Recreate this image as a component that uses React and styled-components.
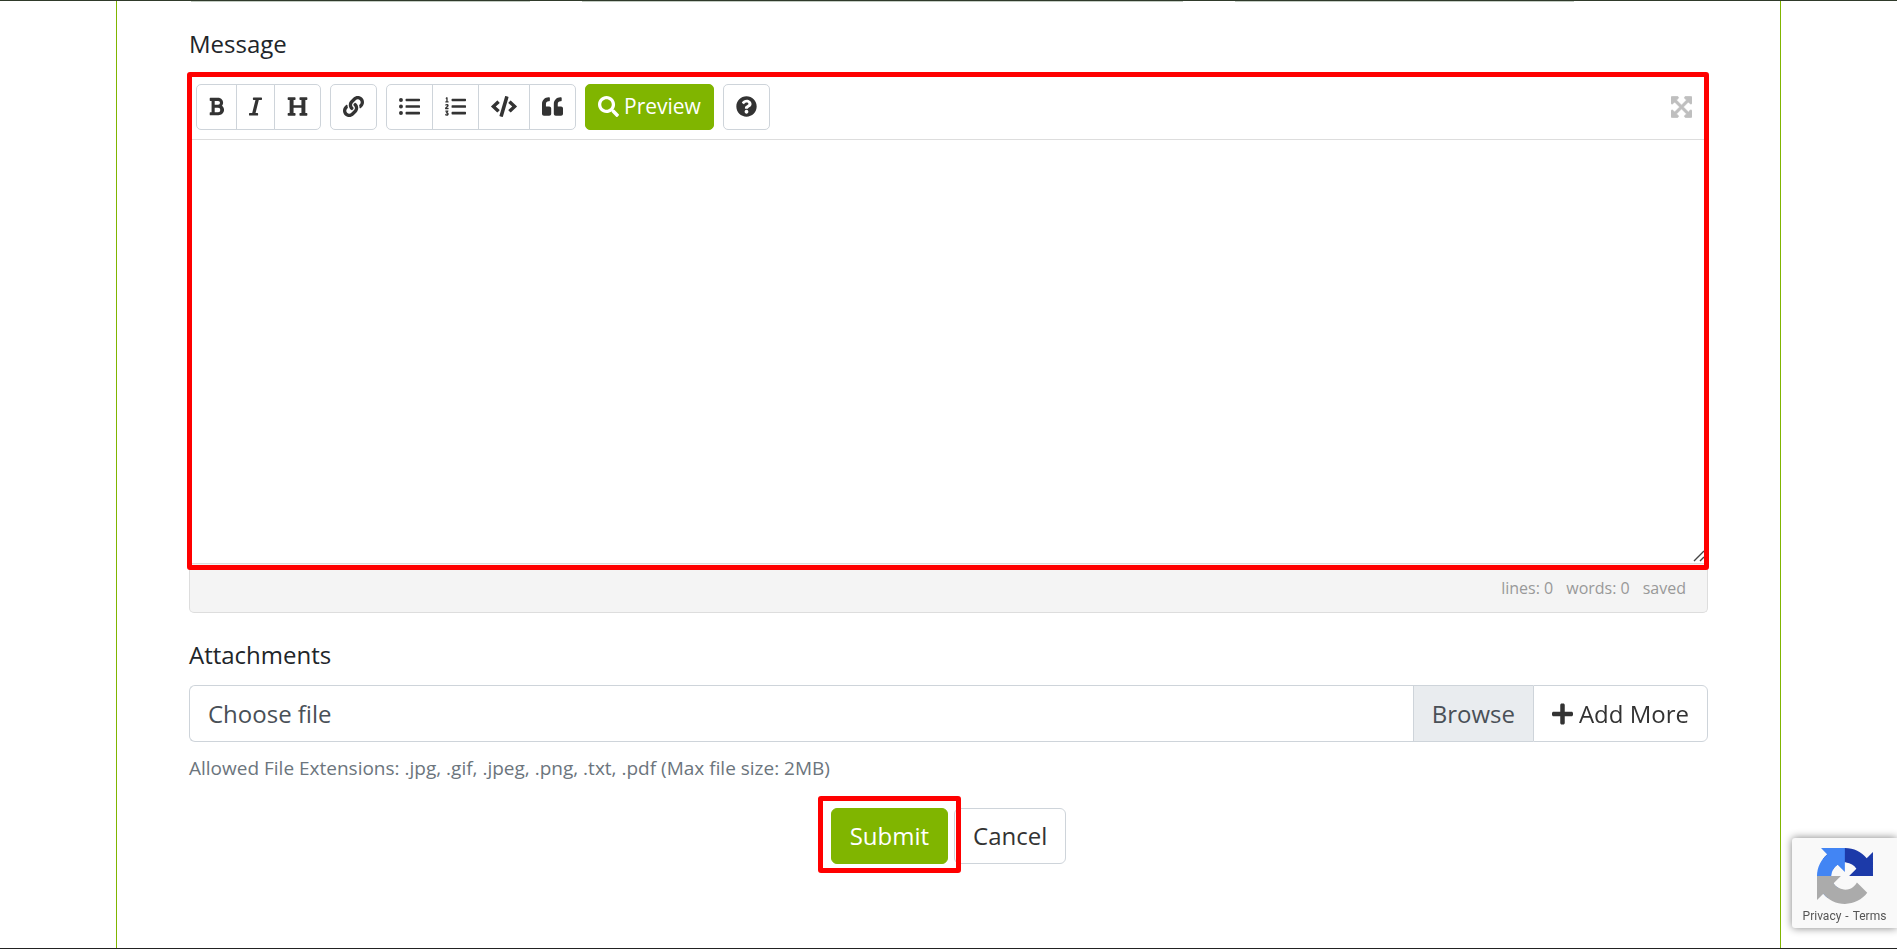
import React from "react";
import styled, { createGlobalStyle } from "styled-components";
import {
  FaBold,
  FaItalic,
  FaHeading,
  FaLink,
  FaListUl,
  FaListOl,
  FaCode,
  FaQuoteLeft,
  FaSearch,
  FaQuestionCircle,
  FaExpandArrowsAlt,
  FaPlus,
} from "react-icons/fa";

const RecaptchaLogo = () => (
  <svg viewBox="0 0 64 64" width="56" height="56" aria-hidden="true">
    <path
      fill="#1c3aa9"
      d="M64 31.955l-.033-1.37V4.687l-7.16 7.16C50.948 4.674 42.033.093 32.05.093c-10.4 0-19.622 4.96-25.458 12.64l11.736 11.86a15.55 15.55 0 0 1 4.754-5.334c2.05-1.6 4.952-2.906 8.968-2.906.485 0 .86.057 1.135.163 4.976.393 9.288 3.14 11.828 7.124l-8.307 8.307L64 31.953"
    />
    <path
      fill="#4285f4"
      d="M31.862.094l-1.37.033H4.594l7.16 7.16C4.58 13.147 0 22.06 0 32.046c0 10.4 4.96 19.622 12.64 25.458L24.5 45.768a15.55 15.55 0 0 1-5.334-4.754c-1.6-2.05-2.906-4.952-2.906-8.968 0-.485.057-.86.163-1.135.393-4.976 3.14-9.288 7.124-11.828l8.307 8.307L31.86.095"
    />
    <path
      fill="#ababab"
      d="M.001 32.045l.033 1.37v25.898l7.16-7.16c5.86 7.173 14.774 11.754 24.76 11.754 10.4 0 19.622-4.96 25.458-12.64l-11.736-11.86a15.55 15.55 0 0 1-4.754 5.334c-2.05 1.6-4.952 2.906-8.968 2.906-.485 0-.86-.057-1.135-.163-4.976-.393-9.288-3.14-11.828-7.124l8.307-8.307-32.04.001"
    />
  </svg>
);

const App = () => {
  return (
    <Page>
      <GlobalStyle />
      <Panel onSubmit={(e) => e.preventDefault()}>
        <FieldEdges>
          <span />
          <span />
          <span />
        </FieldEdges>

        <Label htmlFor="message">Message</Label>
        <Editor>
          <Highlight>
            <Toolbar>
              <Group>
                <ToolButton type="button" aria-label="Bold" $icon={15}>
                  <FaBold />
                </ToolButton>
                <ToolButton type="button" aria-label="Italic" $icon={13}>
                  <FaItalic />
                </ToolButton>
                <ToolButton type="button" aria-label="Heading">
                  <FaHeading />
                </ToolButton>
              </Group>
              <Group>
                <ToolButton type="button" aria-label="Link">
                  <FaLink />
                </ToolButton>
              </Group>
              <Group>
                <ToolButton type="button" aria-label="Unordered list">
                  <FaListUl />
                </ToolButton>
                <ToolButton type="button" aria-label="Ordered list">
                  <FaListOl />
                </ToolButton>
                <ToolButton type="button" aria-label="Code" $icon={26}>
                  <FaCode />
                </ToolButton>
                <ToolButton type="button" aria-label="Quote">
                  <FaQuoteLeft />
                </ToolButton>
              </Group>
              <Group>
                <ToolButton type="button" $primary>
                  <FaSearch />
                  Preview
                </ToolButton>
              </Group>
              <Group>
                <ToolButton type="button" aria-label="Help">
                  <FaQuestionCircle />
                </ToolButton>
              </Group>
              <Fullscreen type="button" aria-label="Fullscreen">
                <FaExpandArrowsAlt />
              </Fullscreen>
            </Toolbar>
            <TextArea id="message" />
            <Grip viewBox="0 0 12 12" aria-hidden="true">
              <path d="M1 11L11 1M7 11L11 7" />
            </Grip>
          </Highlight>
          <Status>
            <span>lines: 0</span>
            <span>words: 0</span>
            <span>saved</span>
          </Status>
        </Editor>

        <Label htmlFor="attachment">Attachments</Label>
        <FileRow>
          <FileInput id="attachment" type="file" />
          <FileLabel htmlFor="attachment">
            <span>Choose file</span>
            <Browse>Browse</Browse>
          </FileLabel>
          <AddMore type="button">
            <FaPlus />
            Add More
          </AddMore>
        </FileRow>
        <Hint>
          Allowed File Extensions: .jpg, .gif, .jpeg, .png, .txt, .pdf (Max file
          size: 2MB)
        </Hint>

        <Actions>
          <SubmitMark>
            <Button type="submit" $primary>
              Submit
            </Button>
          </SubmitMark>
          <Button type="button">Cancel</Button>
        </Actions>
      </Panel>

      <Recaptcha>
        <RecaptchaLogo />
        <p>
          <a href="#privacy">Privacy</a>
          <span>-</span>
          <a href="#terms">Terms</a>
        </p>
      </Recaptcha>
    </Page>
  );
};

export default App;

const GlobalStyle = createGlobalStyle`
  *, *::before, *::after {
    box-sizing: border-box;
  }
  body {
    margin: 0;
    background: #fff;
    color: #212529;
    font-family: "Open Sans", sans-serif;
    font-size: 24px;
    line-height: 36px;
  }
  button, textarea {
    font: inherit;
  }
`;

const Page = styled.main`
  min-height: 100vh;
  display: flex;
  padding: 0 116px;
  border-top: 1px solid #2f3a2a;
  border-bottom: 1px solid #222;
`;

const Panel = styled.form`
  flex: 1;
  min-width: 0;
  padding: 0 72px;
  border: solid #80b500;
  border-width: 0 1px;
`;

const FieldEdges = styled.div`
  display: grid;
  grid-template-columns: 343fr 604fr 343fr;
  gap: 48px;
  margin-bottom: 24px;
  padding-right: 132px;
  span {
    height: 1px;
    margin: 0 2px;
    background: #c4cdc4;
  }
`;

const Label = styled.label`
  display: block;
  margin-bottom: 12px;
`;

const Editor = styled.div`
  margin-bottom: 24px;
`;

const Highlight = styled.div`
  position: relative;
  border: solid #ddd;
  border-width: 1px 1px 0;
  &::after {
    content: "";
    position: absolute;
    inset: -3px -2px -6px -3px;
    border: 5px solid #f00;
    border-radius: 3px;
    pointer-events: none;
  }
`;

const Toolbar = styled.div`
  display: flex;
  align-items: center;
  gap: 9px;
  padding: 9px 6px;
  border-bottom: 1px solid #ddd;
`;

const Group = styled.div`
  display: flex;
`;

const ToolButton = styled.button`
  display: flex;
  align-items: center;
  gap: 5px;
  height: 46px;
  padding: 0 12px 2px;
  border: 1px solid ${({ $primary }) => ($primary ? "#80b500" : "#ced4da")};
  background: ${({ $primary }) => ($primary ? "#80b500" : "#fff")};
  color: ${({ $primary }) => ($primary ? "#fff" : "#333")};
  font-size: 21px;
  line-height: 32px;
  & + & {
    margin-left: -1px;
  }
  &:first-child {
    border-top-left-radius: 5px;
    border-bottom-left-radius: 5px;
  }
  &:last-child {
    border-top-right-radius: 5px;
    border-bottom-right-radius: 5px;
  }
  svg {
    width: ${({ $icon = 21 }) => $icon}px;
  }
`;

const Fullscreen = styled.button`
  display: flex;
  margin-left: auto;
  padding: 0 9px;
  border: 0;
  background: none;
  color: #bfbfbf;
  font-size: 24px;
  svg {
    width: 21px;
    stroke-width: 16px;
  }
`;

const TextArea = styled.textarea`
  display: block;
  width: 100%;
  height: 424px;
  padding: 12px;
  border: 0;
  border-bottom: 1px solid #ddd;
  outline: 0;
  resize: none;
`;

const Grip = styled.svg`
  position: absolute;
  right: 2px;
  bottom: 2px;
  width: 12px;
  height: 12px;
  fill: none;
  stroke: #444;
  stroke-width: 1.4;
  pointer-events: none;
`;

const Status = styled.div`
  display: flex;
  justify-content: flex-end;
  gap: 13px;
  padding: 10px 21px;
  border: solid #ddd;
  border-width: 0 1px 1px;
  border-radius: 0 0 5px 5px;
  background: #f4f4f4;
  color: #999;
  font-size: 16px;
  line-height: 28px;
`;

const FileRow = styled.div`
  position: relative;
  display: flex;
  height: 57px;
`;

const FileInput = styled.input`
  position: absolute;
  inset: 0;
  opacity: 0;
`;

const FileLabel = styled.label`
  position: relative;
  flex: 1;
  display: flex;
  align-items: center;
  justify-content: space-between;
  padding-left: 18px;
  border: 1px solid #ced4da;
  border-right: 0;
  border-radius: 6px 0 0 6px;
  background: #fff;
  color: #495057;
`;

const Browse = styled.span`
  display: flex;
  align-items: center;
  height: 100%;
  padding: 0 18px;
  border-left: 1px solid #ced4da;
  background: #e9ecef;
`;

const AddMore = styled.button`
  position: relative;
  display: flex;
  align-items: center;
  gap: 6px;
  padding: 0 18px;
  border: 1px solid #ced4da;
  border-radius: 0 6px 6px 0;
  background: #fff;
  color: #333;
  svg {
    width: 21px;
  }
`;

const Hint = styled.p`
  margin: 12px 0 26px;
  color: #6c757d;
  font-size: 19px;
  line-height: 28px;
`;

const Actions = styled.div`
  display: flex;
  justify-content: center;
  gap: 6px;
`;

const SubmitMark = styled.div`
  position: relative;
  z-index: 1;
  &::after {
    content: "";
    position: absolute;
    inset: -12px -13px -9px;
    border: 5px solid #f00;
    border-radius: 3px;
    pointer-events: none;
  }
`;

const Button = styled.button`
  height: 56px;
  padding: 0 18px;
  border: 1px solid ${({ $primary }) => ($primary ? "#80b500" : "#ced4da")};
  border-radius: 6px;
  background: ${({ $primary }) => ($primary ? "#80b500" : "#fff")};
  color: ${({ $primary }) => ($primary ? "#fff" : "#333")};
`;

const Recaptcha = styled.aside`
  position: fixed;
  right: 0;
  bottom: 21px;
  display: flex;
  flex-direction: column;
  align-items: center;
  width: 105px;
  height: 90px;
  padding-top: 10px;
  border-radius: 3px 0 0 3px;
  background: #f9f9f9;
  box-shadow: 0 0 8px #808080;
  p {
    display: flex;
    gap: 4px;
    margin: 3px 0 0;
    color: #555;
    font-family: Roboto, sans-serif;
    font-size: 12px;
    line-height: 18px;
  }
  a {
    color: inherit;
    text-decoration: none;
  }
`;
